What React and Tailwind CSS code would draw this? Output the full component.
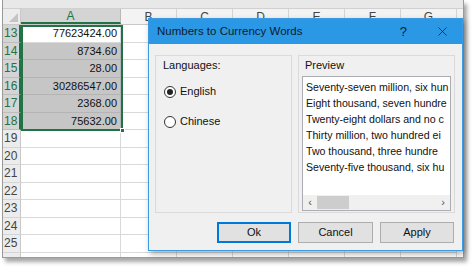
import React from "react";
import { X } from "lucide-react";

const columns = ["B", "C", "D", "E", "F", "G"];

const rows = [
  { n: 13, v: "77623424.00" },
  { n: 14, v: "8734.60" },
  { n: 15, v: "28.00" },
  { n: 16, v: "30286547.00" },
  { n: 17, v: "2368.00" },
  { n: 18, v: "75632.00" },
  { n: 19 },
  { n: 20 },
  { n: 21 },
  { n: 22 },
  { n: 23 },
  { n: 24 },
  { n: 25 },
];

// only what shows inside the list box
const preview = [
  "Seventy-seven million, six hun",
  "Eight thousand, seven hundre",
  "Twenty-eight dollars and no c",
  "Thirty million, two hundred ei",
  "Two thousand, three hundre",
  "Seventy-five thousand, six hu",
];

function Radio({ checked, label }) {
  return (
    <div className="flex items-center gap-[4px] h-[14px]">
      <span className="w-[12px] h-[12px] rounded-full border border-[#333] bg-white flex items-center justify-center">
        {checked && <span className="w-[6px] h-[6px] rounded-full bg-[#222]" />}
      </span>
      <span className="text-[11px] text-[#111]">{label}</span>
    </div>
  );
}

function Sheet() {
  return (
    <div className="relative ml-[2px] w-[462px] h-[258px] bg-white border-l border-b border-r border-[#9a9a9a] shadow-[3px_4px_4px_rgba(0,0,0,0.35)] overflow-hidden">
      {/* strip above headers */}
      <div className="h-[9px] bg-[#e8e8e8] border-b border-[#d0d0d0]" />
      {/* column headers */}
      <div className="flex h-[16px] bg-[#f3f3f3] border-b border-[#c8c8c8] text-[12px] text-[#444]">
        <div className="w-[18px] shrink-0 border-r border-[#c8c8c8] bg-[#ececec] flex items-end justify-end p-[2px]">
          <span className="w-0 h-0 border-l-[9px] border-l-transparent border-b-[9px] border-b-[#c4c4c4]" />
        </div>
        <div className="w-[100px] shrink-0 bg-[#d4d4d4] border-r border-[#b8b8b8] border-b-2 border-b-[#217346] flex items-center justify-center text-[#217346]">
          A
        </div>
        {columns.map((c) => (
          <div
            key={c}
            className="w-[56px] shrink-0 border-r border-[#d4d4d4] flex items-center justify-center"
          >
            {c}
          </div>
        ))}
      </div>
      {/* rows */}
      {rows.map((r) => {
        const sel = r.n >= 13 && r.n <= 18;
        return (
          <div key={r.n} className="flex h-[17.5px] text-[11px]">
            <div
              className={
                sel
                  ? "w-[18px] shrink-0 bg-[#d4d4d4] border-r-2 border-[#217346] border-b border-b-[#bdbdbd] text-[#217346] pl-[1px] flex items-center text-[12px]"
                  : "w-[18px] shrink-0 bg-[#ececec] border-r border-[#c8c8c8] border-b border-b-[#d4d4d4] text-[#444] pl-[1px] flex items-center text-[12px]"
              }
            >
              {r.n}
            </div>
            <div
              className={
                (sel && r.n !== 13 ? "bg-[#c6c6c6] border-[#b4b4b4] " : "bg-white border-[#d9d9d9] ") +
                "w-[100px] shrink-0 border-r border-b flex items-center justify-end pr-[3px] text-[#111]"
              }
            >
              {r.v}
            </div>
            {columns.map((c) => (
              <div
                key={c}
                className="w-[56px] shrink-0 border-r border-b border-[#d9d9d9]"
              />
            ))}
          </div>
        );
      })}
      {/* empty row below 25 */}
      <div className="flex h-[17.5px]">
        <div className="w-[18px] shrink-0 bg-[#ececec] border-r border-[#c8c8c8]" />
        <div className="w-[100px] shrink-0 border-r border-[#d9d9d9]" />
        {columns.map((c) => (
          <div key={c} className="w-[56px] shrink-0 border-r border-[#d9d9d9]" />
        ))}
      </div>
      {/* selection outline */}
      <div className="absolute left-[18px] top-[25px] w-[102px] h-[106px] border-2 border-[#217346] pointer-events-none">
        <span className="absolute -right-[4px] -bottom-[4px] w-[5px] h-[5px] bg-[#217346] border border-white" />
      </div>
    </div>
  );
}

function Dialog() {
  return (
    <div className="absolute left-[148px] top-[18px] w-[315px] h-[233px] bg-[#f0f0f0] border border-[#3d9be4] shadow-[2px_3px_6px_rgba(0,0,0,0.3)] flex flex-col">
      <div className="h-[25px] bg-[#2b98e6] flex items-center pl-[8px] pr-[12px] text-[11.5px] text-[#0d1b2a]">
        <span className="flex-1">Numbers to Currency Words</span>
        <span className="mr-[28px] text-[13px]">?</span>
        <X size={15} strokeWidth={1.2} className="text-[#0d1b2a]" />
      </div>
      <div className="flex-1 flex flex-col px-[6px] pt-[11px] pb-[7px]">
        <div className="flex gap-[6px] h-[158px]">
          <div className="w-[137px] shrink-0 border border-[#dadada] px-[7px] pt-[1px] flex flex-col">
            <span className="text-[11px] text-[#111]">Languages:</span>
            <div className="mt-[11px] pl-[1px] flex flex-col gap-[16px]">
              <Radio checked label="English" />
              <Radio label="Chinese" />
            </div>
          </div>
          <div className="w-[157px] shrink-0 min-w-0 border border-[#dadada] px-[3px] pt-[1px] flex flex-col">
            <span className="text-[11px] text-[#111] pl-[3px]">Preview</span>
            <div className="mt-[2px] h-[135px] bg-white border border-[#abadb3] flex flex-col overflow-hidden">
              <div className="flex-1 min-w-0 overflow-hidden pl-[3px] pt-[2px]">
                {preview.map((p) => (
                  <div
                    key={p}
                    className="h-[16px] whitespace-nowrap text-[10.6px] text-[#111] leading-[16px]"
                  >
                    {p}
                  </div>
                ))}
              </div>
              <div className="h-[15px] bg-[#f0f0f0] flex items-center text-[#555] text-[11px]">
                <span className="w-[14px] text-center">‹</span>
                <span className="w-[32px] h-[13px] bg-[#cdcdcd]" />
                <span className="flex-1" />
                <span className="w-[14px] text-center">›</span>
              </div>
            </div>
          </div>
        </div>
        <div className="mt-auto flex justify-end gap-[7px] pr-[2px]">
          <button className="w-[74px] h-[21px] bg-[#e1e1e1] border-2 border-[#0078d7] text-[11px] text-[#111]">
            Ok
          </button>
          <button className="w-[75px] h-[21px] bg-[#e1e1e1] border border-[#adadad] text-[11px] text-[#111]">
            Cancel
          </button>
          <button className="w-[74px] h-[21px] bg-[#e1e1e1] border border-[#adadad] text-[11px] text-[#111]">
            Apply
          </button>
        </div>
      </div>
    </div>
  );
}

export default function App() {
  return (
    <div className="relative w-[474px] h-[269px] bg-white overflow-hidden font-['Liberation_Sans',Arial,sans-serif]">
      <Sheet />
      <Dialog />
    </div>
  );
}
